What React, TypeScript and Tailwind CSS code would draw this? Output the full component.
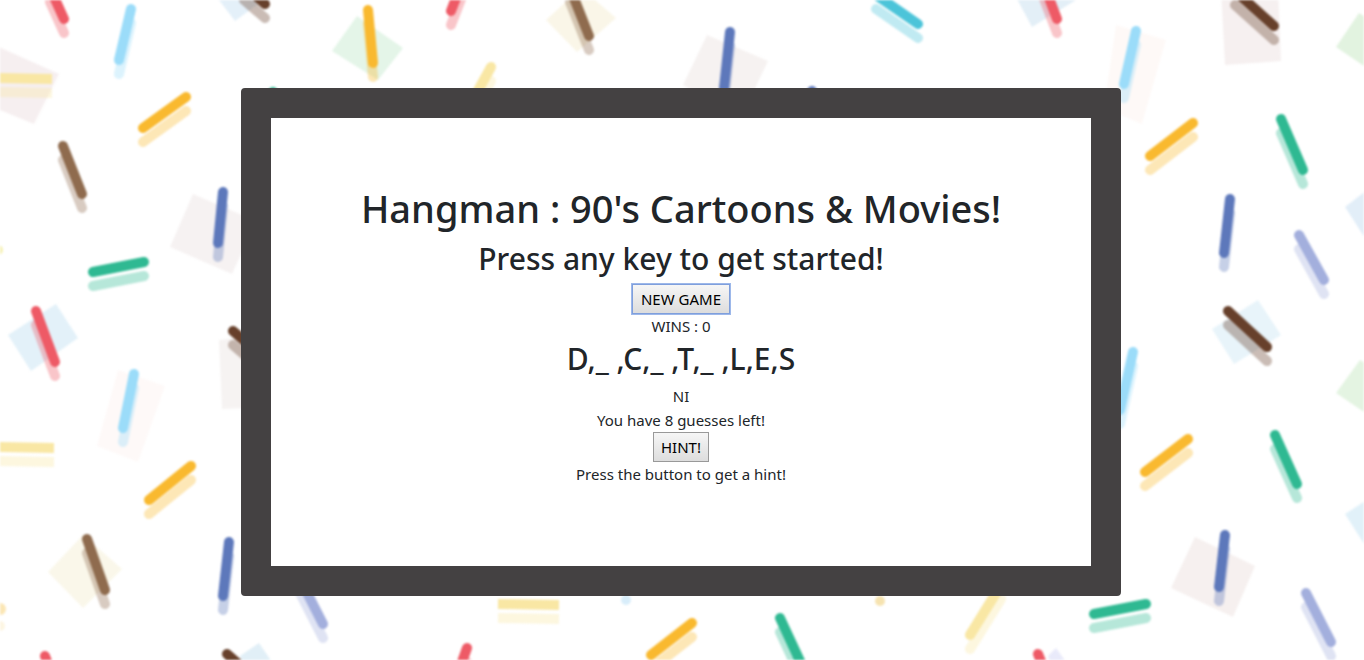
import { useState } from 'react';

type Stick = [x1: number, y1: number, x2: number, y2: number, color: string, cap?: 'round' | 'butt'];

const RED = '#ee5a66';
const SKY = '#9bdcf9';
const STRAW = '#f9e7a4';
const AMBER = '#f9b92f';
const BROWN = '#8f6b4e';
const COCOA = '#67402b';
const BLUE = '#5d78bb';
const GREEN = '#2fb992';
const LAVENDER = '#a3afdd';
const TEAL = '#4cc4d9';

const STICKS: Stick[] = [
  [50, -12, 64, 19, RED],
  [131, 9, 119, 60, SKY],
  [-6, 78, 52, 79, STRAW, 'butt'],
  [186, 97, 143, 128, AMBER],
  [63, 146, 82, 194, BROWN],
  [223, 192, 218, 243, BLUE],
  [244, -14, 265, 4, COCOA],
  [93, 272, 144, 262, GREEN],
  [36, 311, 55, 362, RED],
  [134, 374, 123, 428, SKY],
  [233, 331, 262, 356, COCOA],
  [-6, 447, 54, 448, STRAW, 'butt'],
  [191, 466, 149, 500, AMBER],
  [87, 539, 105, 590, BROWN],
  [229, 542, 223, 596, BLUE],
  [45, 656, 54, 680, RED],
  [227, 654, 250, 674, COCOA],
  [1136, 31, 1124, 84, SKY],
  [1235, -9, 1274, 26, COCOA],
  [1193, 123, 1150, 156, AMBER],
  [1281, 119, 1303, 170, GREEN],
  [1230, 199, 1224, 253, BLUE],
  [1299, 235, 1324, 280, LAVENDER],
  [1228, 311, 1267, 347, COCOA],
  [1133, 352, 1120, 410, SKY],
  [1188, 439, 1145, 472, AMBER],
  [1275, 435, 1297, 484, GREEN],
  [1225, 535, 1219, 587, BLUE],
  [1306, 593, 1331, 642, LAVENDER],
  [1094, 614, 1146, 604, GREEN],
  [368, 10, 373, 63, AMBER],
  [463, -20, 451, 11, RED],
  [570, -12, 589, 36, BROWN],
  [491, 67, 470, 105, STRAW],
  [273, 92, 276, 110, GREEN],
  [730, 32, 724, 88, BLUE],
  [876, -5, 918, 24, TEAL],
  [1043, -18, 1057, 19, RED],
  [812, 91, 814, 105, BLUE],
  [298, 575, 323, 624, LAVENDER],
  [498, 604, 559, 605, STRAW, 'butt'],
  [467, 648, 457, 676, RED],
  [692, 623, 651, 655, AMBER],
  [780, 618, 806, 674, GREEN],
  [1001, 585, 970, 635, STRAW],
  [1038, 654, 1047, 676, RED],
];

const SQUARES: [points: string, color: string][] = [
  ['-12,42 59,74 34,124 -24,100', '#f6eff0'],
  ['219,0 235,21 258,4 240,-20', '#e4f0f9'],
  ['193,194 256,221 232,274 170,247', '#f6f2f2'],
  ['8,335 56,304 78,338 31,371', '#e3f1f9'],
  ['118,370 165,386 138,462 97,446', '#fef9f8'],
  ['219,340 262,335 264,407 222,409', '#f6f3f2'],
  ['83,535 122,569 83,608 48,572', '#faf7ea'],
  ['240,656 259,643 276,668 250,680', '#e1eff7'],
  ['1116,25 1166,40 1142,124 1104,108', '#fef9f7'],
  ['1221,-10 1278,-12 1281,61 1225,65', '#f6f0f0'],
  ['1336,47 1359,13 1400,40 1376,74', '#e2f3e0'],
  ['1345,207 1380,180 1380,255 1374,252', '#e2eef8'],
  ['1212,329 1258,300 1281,335 1234,364', '#e8f4fa'],
  ['1336,393 1360,360 1400,386 1376,420', '#e4f4e2'],
  ['1345,514 1392,484 1400,520 1368,550', '#e1f1f9'],
  ['1195,537 1255,566 1233,617 1171,588', '#f6f0ef'],
  ['357,16 403,48 378,80 332,51', '#e4f5e8'],
  ['546,20 581,-12 616,18 577,52', '#faf6e8'],
  ['707,35 768,61 740,120 683,85', '#f6f2f1'],
  ['1010,-14 1070,-20 1076,0 1032,27', '#e3eff7'],
  ['1048,656 1056,648 1066,662 1054,672', '#e9eafa'],
];

function Sprinkles() {
  return (
    <svg
      className="absolute inset-0 -z-10 h-full w-full blur-[1px]"
      viewBox="0 0 1364 660"
      preserveAspectRatio="xMidYMid slice"
      aria-hidden="true"
    >
      {SQUARES.map(([points, color]) => (
        <polygon key={points} points={points} fill={color} />
      ))}
      {STICKS.map(([x1, y1, x2, y2, color, cap = 'round']) => (
        <g key={`${x1},${y1}`} stroke={color} strokeWidth="10" strokeLinecap={cap}>
          <line x1={x1} y1={y1 + 14} x2={x2} y2={y2 + 14} opacity="0.35" />
          <line x1={x1} y1={y1} x2={x2} y2={y2} />
        </g>
      ))}
      <circle cx="-2" cy="250" r="5" fill="#f5f1b4" />
      <circle cx="0" cy="609" r="6" fill="#fbe6b4" />
      <circle cx="0" cy="626" r="5" fill="#fdf6e2" />
      <circle cx="626" cy="600" r="5" fill="#d8edfa" />
      <circle cx="880" cy="601" r="5" fill="#f6e3b0" />
    </svg>
  );
}

const BUTTON = 'h-[30px] border bg-linear-to-b from-[#f6f6f6] to-[#dddddd] text-[15px] text-black';

export default function App() {
  const [hint, setHint] = useState('Press the button to get a hint!');

  return (
    <div className="relative isolate min-h-screen overflow-hidden bg-white pt-[88px] pr-0.5 pb-16 font-['Noto_Sans','Open_Sans',sans-serif] text-[#212529]">
      <Sprinkles />
      <main className="mx-auto flex w-full max-w-[880px] flex-col items-center rounded border-[30px] border-[#444142] bg-white pt-[66px] pb-20 text-center text-[15px] leading-6">
        <h1 className="mb-2 text-[38px] leading-[48px] font-medium">Hangman : 90's Cartoons &amp; Movies!</h1>
        <h2 className="mb-1.5 text-[30px] leading-[38px] font-medium">Press any key to get started!</h2>
        <button
          type="button"
          className={`${BUTTON} border-[#7f9fdc] px-2 outline outline-[#9db8ea]`}
          onClick={() => setHint('Press the button to get a hint!')}
        >
          NEW GAME
        </button>
        <p>WINS : 0</p>
        <h2 className="mb-1 text-[30px] leading-[42px] font-medium">D,_ ,C,_ ,T,_ ,L,E,S</h2>
        <p>NI</p>
        <p>You have 8 guesses left!</p>
        <button
          type="button"
          className={`${BUTTON} border-[#999999] px-[7px]`}
          onClick={() => setHint('Heroes in a half shell')}
        >
          HINT!
        </button>
        <p>{hint}</p>
      </main>
    </div>
  );
}
